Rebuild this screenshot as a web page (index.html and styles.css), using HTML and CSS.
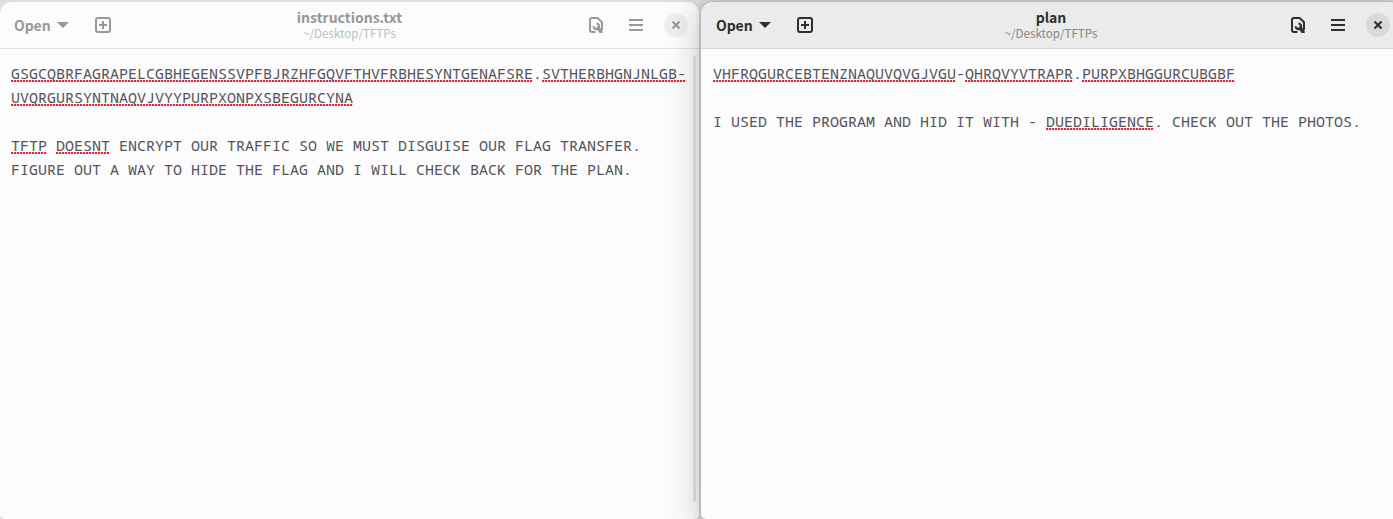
FILE: index.html
```html
<!DOCTYPE html>
<html lang="en">
<head>
<meta charset="utf-8">
<title>Text Editor</title>
<link rel="stylesheet" href="styles.css">
</head>
<body>
<svg class="defs" width="0" height="0" aria-hidden="true">
  <symbol id="new-tab" viewBox="0 0 16 16"><rect x="1" y="1" width="14" height="14" rx="2" fill="none" stroke="currentColor" stroke-width="2"/><path d="M8 4v8M4 8h8" fill="none" stroke="currentColor" stroke-width="2"/></symbol>
  <symbol id="doc-tools" viewBox="0 0 16 16"><path d="M7.5 15H4a2 2 0 0 1-2-2V3a2 2 0 0 1 2-2h5.6L14 5.2V13" fill="none" stroke="currentColor" stroke-width="2"/><path d="M8.4 5.4a3.7 3.7 0 0 1 3.6 5L14.8 14.6c.3.7 0 1.4-.7 1.4h-2.6L9.6 12.9A3.7 3.7 0 0 1 4.6 9.2H6.8V10.6H8.8L9.6 9.8V7.8H8.4z" fill="currentColor"/></symbol>
  <symbol id="menu" viewBox="0 0 16 16"><path d="M1 3h14M1 8h14M1 13h14" stroke="currentColor" stroke-width="2"/></symbol>
  <symbol id="close" viewBox="0 0 16 16"><path d="M5.2 5.2l5.6 5.6M10.8 5.2l-5.6 5.6" stroke="currentColor" stroke-width="2.1" stroke-linecap="square"/></symbol>
</svg>
<main class="desktop">
  <section class="window inactive">
    <header class="bar">
      <div class="side"><span class="open">Open</span><span class="arrow"></span><svg class="icon add"><use href="#new-tab"/></svg></div>
      <div class="title"><h1 class="name">instructions.txt</h1><p class="path">~/Desktop/TFTPs</p></div>
      <div class="side end"><svg class="icon"><use href="#doc-tools"/></svg><svg class="icon"><use href="#menu"/></svg><span class="close"><svg class="icon"><use href="#close"/></svg></span></div>
    </header>
    <div class="editor">
      <p class="line"><span class="typo">GSGCQBRFAGRAPELCGBHEGENSSVPFBJRZHFGQVFTHVFRBHESYNTGENAFSRE</span>.<span class="typo">SVTHERBHGNJNLGB-</span></p>
      <p class="line"><span class="typo">UVQRGURSYNTNAQVJVYYPURPXONPXSBEGURCYNA</span></p>
      <p class="line"></p>
      <p class="line"><span class="typo">TFTP</span> <span class="typo">DOESNT</span> ENCRYPT OUR TRAFFIC SO WE MUST DISGUISE OUR FLAG TRANSFER.</p>
      <p class="line">FIGURE OUT A WAY TO HIDE THE FLAG AND I WILL CHECK BACK FOR THE PLAN.</p>
    </div>
    <span class="scrollbar"></span>
  </section>
  <section class="window active">
    <header class="bar">
      <div class="side"><span class="open">Open</span><span class="arrow"></span><svg class="icon add"><use href="#new-tab"/></svg></div>
      <div class="title"><h1 class="name">plan</h1><p class="path">~/Desktop/TFTPs</p></div>
      <div class="side end"><svg class="icon"><use href="#doc-tools"/></svg><svg class="icon"><use href="#menu"/></svg><span class="close"><svg class="icon"><use href="#close"/></svg></span></div>
    </header>
    <div class="editor">
      <p class="line"><span class="typo">VHFRQGURCEBTENZNAQUVQVGJVGU</span>-<span class="typo">QHRQVYVTRAPR</span>.<span class="typo">PURPXBHGGURCUBGBF</span></p>
      <p class="line"></p>
      <p class="line">I USED THE PROGRAM AND HID IT WITH - <span class="typo">DUEDILIGENCE</span>. CHECK OUT THE PHOTOS.</p>
    </div>
  </section>
</main>
</body>
</html>
```
FILE: styles.css
```css
* { box-sizing: border-box; margin: 0; padding: 0; }
body { height: 519px; overflow: hidden; background: #dedede; }
.defs { display: block; }
.desktop {
  display: grid;
  grid-template-columns: 699px 700px;
  column-gap: 2px;
  height: 519px;
  padding-top: 2px;
  overflow: hidden;
}
.window {
  position: relative;
  height: 517px;
  border-radius: 12px 12px 5px 5px;
  background: #fcfcfc;
}
.active { box-shadow: 0 0 0 1px #b9b9b9, 0 1px 6px 1px rgba(0,0,0,.12), 0 3px 34px 4px rgba(0,0,0,.19); }
.bar {
  display: grid;
  grid-template-columns: 1fr auto 1fr;
  height: 47px;
  border-bottom: 1px solid #e4e4e4;
  border-radius: 12px 12px 0 0;
  color: #989898;
}
.active .bar { background: #ebebeb; border-color: #d9d9d9; color: #2f2f2f; }
.side { display: flex; align-items: center; padding-left: 14px; }
.active .side:first-child { padding-left: 15px; }
.open { width: 36px; font: 700 14px/20px "Noto Sans CJK SC", sans-serif; letter-spacing: -.1px; }
.arrow { margin-left: 7px; border: 6px solid transparent; border-top-color: currentColor; border-bottom: 0; }
.add { margin-left: 26px; }
.icon { display: block; width: 16px; height: 16px; }
.end { justify-content: flex-end; gap: 24px; padding: 0 11px 0 0; }
.close { display: grid; place-items: center; width: 24px; height: 24px; margin-left: -4px; border-radius: 50%; background: #efefef; }
.active .close { background: #d9d9d9; }
.title { padding-top: 6px; text-align: center; }
.name { font: 700 14px/18px "Noto Sans CJK SC", sans-serif; }
.path { margin-top: 1px; font: 400 11.6px/13px "Noto Sans CJK SC", sans-serif; color: #bdbdbd; }
.active .path { color: #858585; }
.editor { padding: 12px 0 0 11px; color: #55535a; font: 400 15px/24px "Noto Sans Mono", "Liberation Mono", monospace; }
.active .editor { padding-left: 12px; }
.line { height: 24px; white-space: pre; }
.typo {
  background: repeating-linear-gradient(90deg, #dd2638 0 2px, #f9d5d8 2px 3px) left bottom 1px / 100% 2px no-repeat;
}
.scrollbar { position: absolute; top: 54px; left: 693px; width: 3px; height: 446px; border-radius: 2px; background: #e4e4e4; }
```
